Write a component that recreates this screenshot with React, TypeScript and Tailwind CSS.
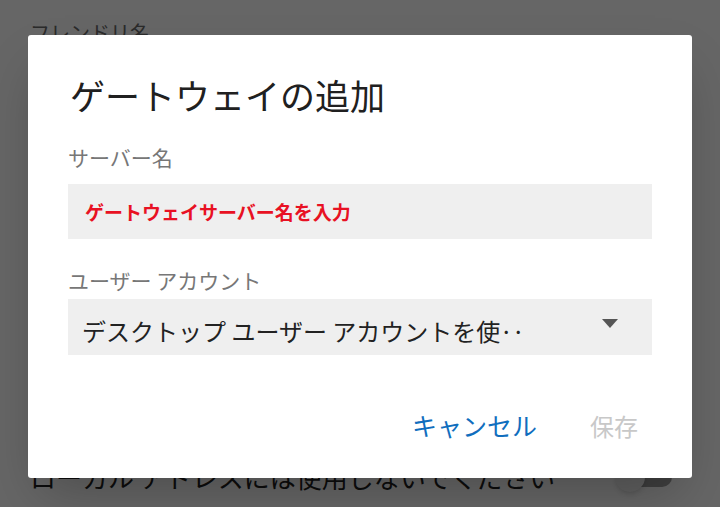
import { useState } from 'react';

const font = { fontFamily: '"Noto Sans CJK JP", "Noto Sans", sans-serif' };

export default function App() {
  const [server, setServer] = useState('');

  return (
    <div className="relative h-[507px] w-full overflow-hidden bg-white" style={font}>
      {/* page underneath */}
      <div className="flex h-full flex-col px-[30px]">
        <p className="mt-[23px] text-[20px] leading-none text-[#6b6b6b]">フレンドリ名</p>
        <div className="mt-auto mb-[13px] flex h-[34px] items-center justify-between pr-[18px]">
          <span className="text-[26px] leading-none text-[#1f1f1f]">ローカル アドレスには使用しないでください</span>
          <div className="relative flex h-[30px] w-[57px] items-center">
            <div className="ml-[10px] h-[20px] w-[47px] rounded-full bg-[#9e9e9e]" />
            <div className="absolute left-0 top-0 h-[30px] w-[30px] rounded-full bg-[#f1f1f1] shadow-md" />
          </div>
        </div>
      </div>

      {/* backdrop */}
      <div className="absolute inset-0 bg-black/60" />

      {/* dialog */}
      <div className="absolute left-[28px] top-[35px] flex h-[443px] w-[664px] flex-col rounded-[3px] bg-white px-[40px] shadow-2xl">
        <h1 className="mt-[42px] ml-[2px] text-[35px] font-normal leading-none text-[#202020]">ゲートウェイの追加</h1>

        <label className="mt-[35px] text-[21px] leading-none text-[#777]">サーバー名</label>
        <input
          value={server}
          onChange={(e) => setServer(e.target.value)}
          placeholder="ゲートウェイサーバー名を入力"
          className="mt-[16px] h-[55px] w-full bg-[#efefef] pl-[17px] text-[19px] font-bold text-[#222] outline-none placeholder:text-[#e81123]"
          style={font}
        />

        <label className="mt-[31px] text-[21px] leading-none text-[#777]">ユーザー アカウント</label>
        <button className="mt-[8px] flex h-[56px] w-full items-center justify-between bg-[#efefef] pl-[14px] pr-[34px] text-left">
          <span className="pt-[8px] text-[24px] leading-none text-[#222]">デスクトップ ユーザー アカウントを使‥</span>
          <svg width="16" height="9" viewBox="0 0 16 9" className="mb-[7px]">
            <path d="M0 0 H16 L8 9 Z" fill="#555" />
          </svg>
        </button>

        <div className="mt-[58px] flex justify-end gap-[53px] pr-[14px]">
          <button className="text-[25px] leading-none text-[#106ebe]">キャンセル</button>
          <button className="text-[24px] leading-none text-[#c8c8c8]">保存</button>
        </div>
      </div>
    </div>
  );
}
